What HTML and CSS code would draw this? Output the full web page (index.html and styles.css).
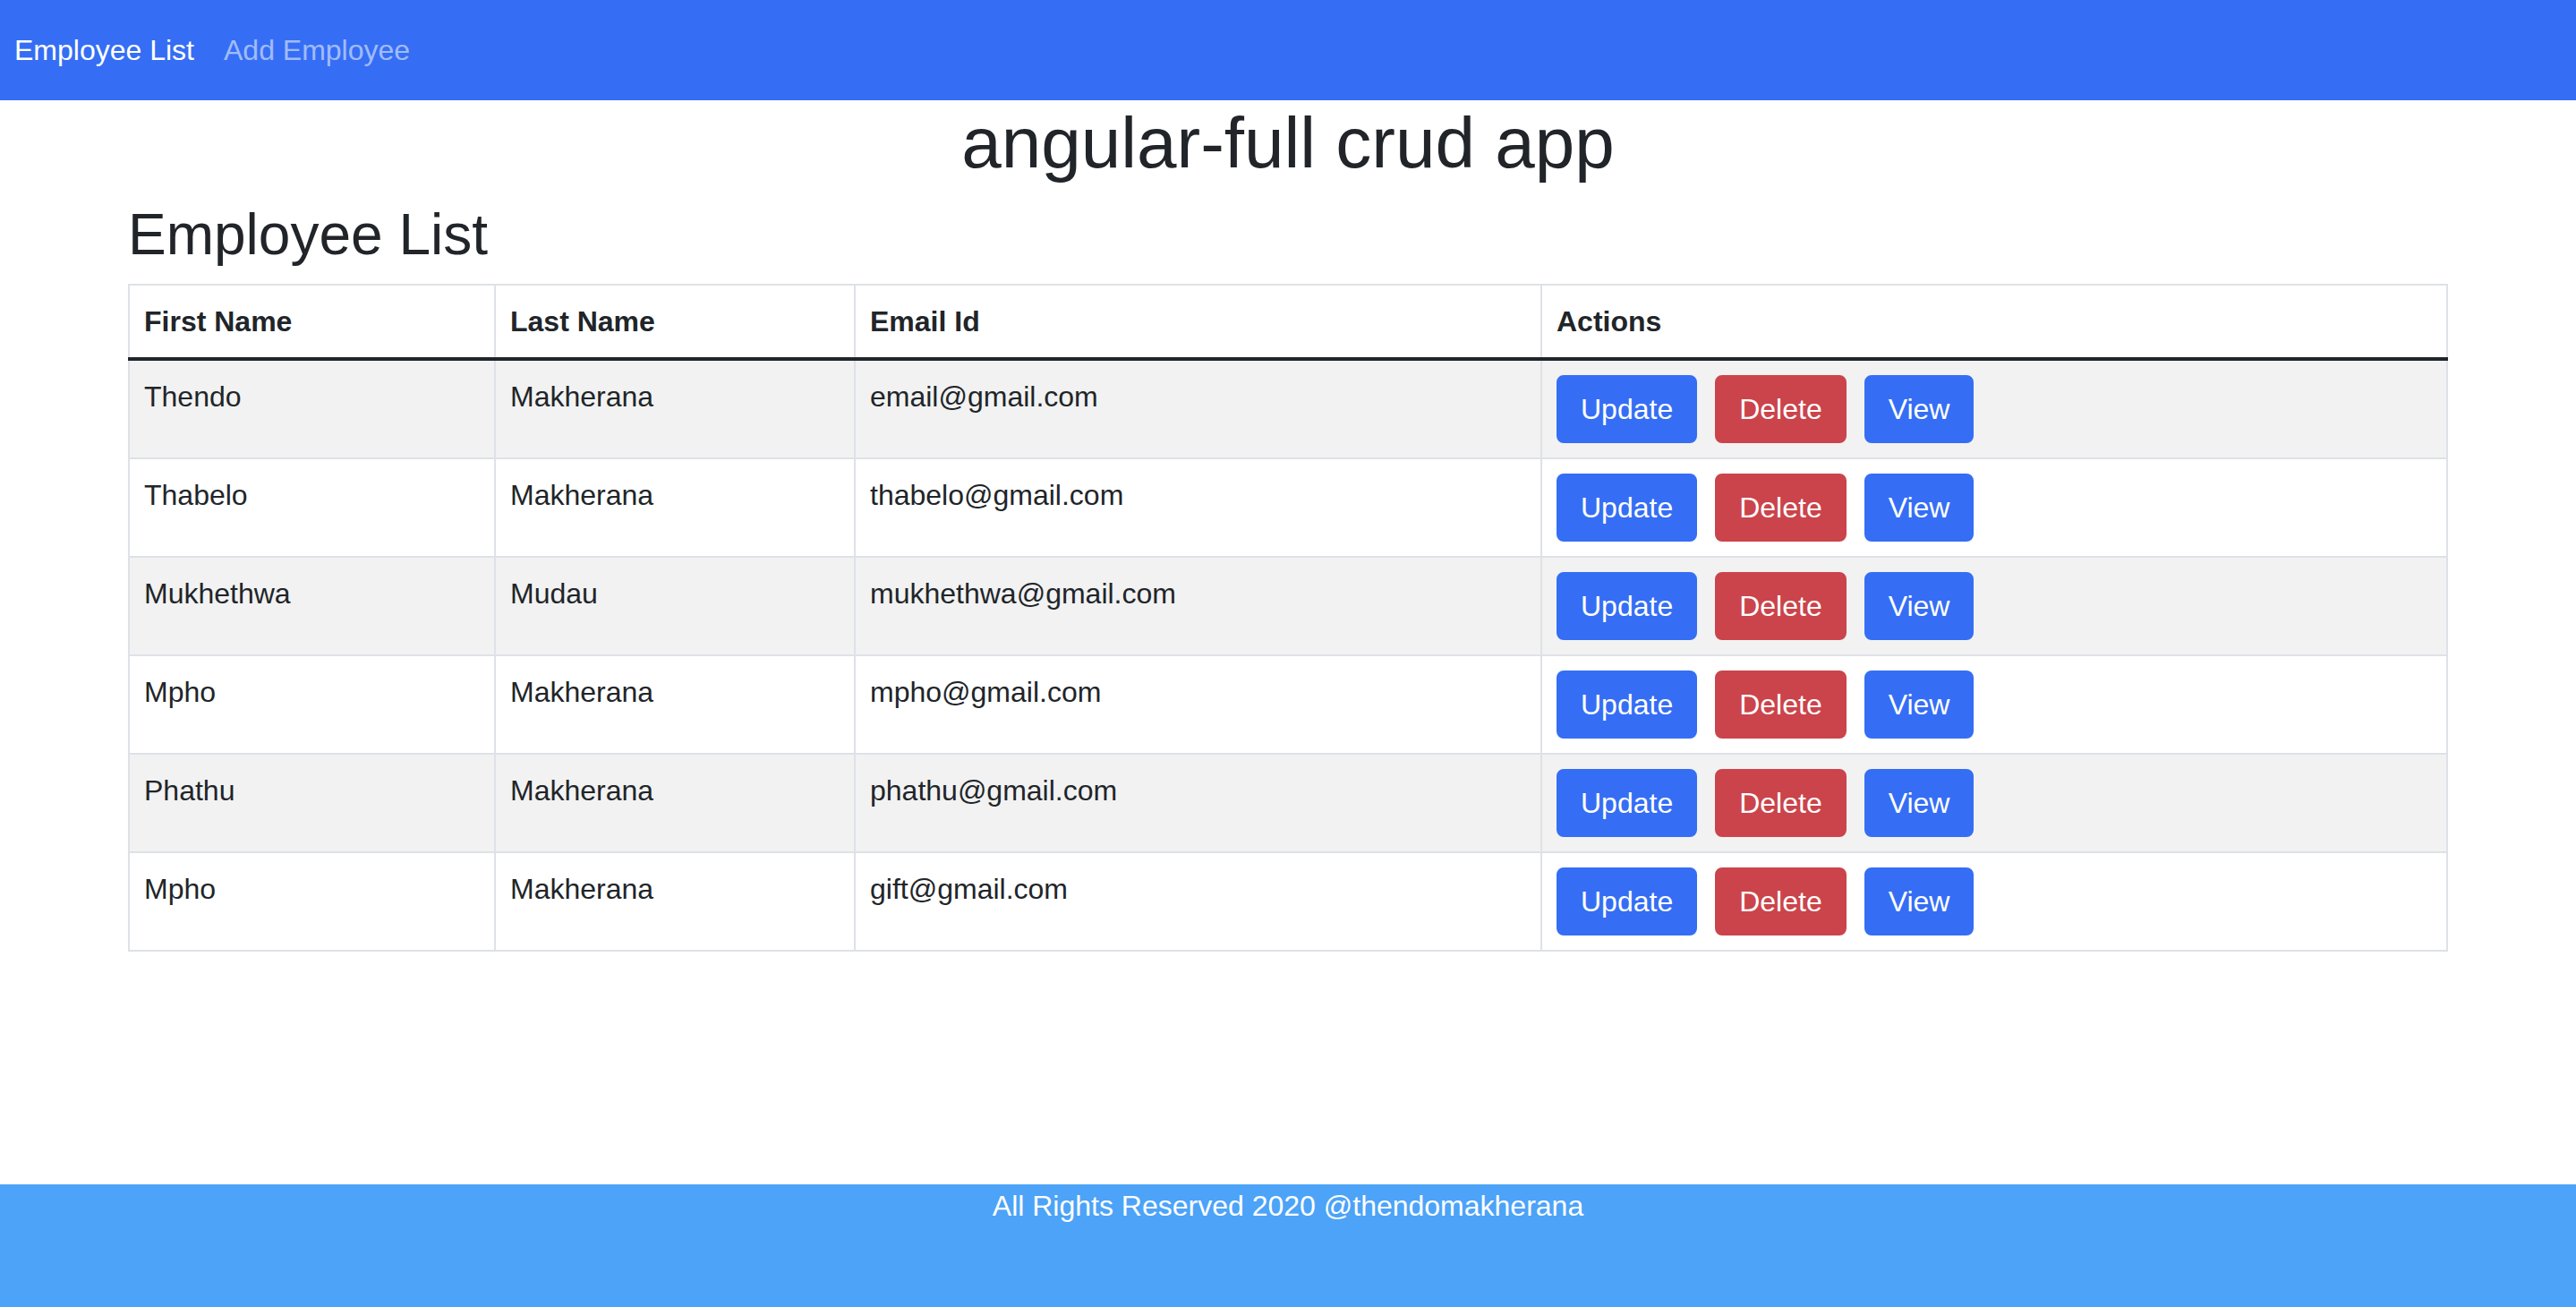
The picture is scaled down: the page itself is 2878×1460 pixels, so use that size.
FILE: index.html
```html
<!DOCTYPE html>
<html lang="en">
<head>
<meta charset="utf-8">
<title>angular-full crud app</title>
<link rel="stylesheet" href="styles.css">
</head>
<body>
<div class="page">
  <nav class="navbar">
    <a class="nav-link active" href="#">Employee List</a>
    <a class="nav-link" href="#">Add Employee</a>
  </nav>
  <main class="main">
    <h1 class="title">angular-full crud app</h1>
    <div class="container">
      <h2 class="subtitle">Employee List</h2>
      <table class="table">
        <colgroup>
          <col class="c1"><col class="c2"><col class="c3"><col class="c4">
        </colgroup>
        <thead>
          <tr><th>First Name</th><th>Last Name</th><th>Email Id</th><th>Actions</th></tr>
        </thead>
        <tbody>
          <tr class="odd"><td>Thendo</td><td>Makherana</td><td>email@gmail.com</td><td><div class="actions"><button class="btn btn-primary">Update</button><button class="btn btn-danger">Delete</button><button class="btn btn-primary">View</button></div></td></tr>
          <tr><td>Thabelo</td><td>Makherana</td><td>thabelo@gmail.com</td><td><div class="actions"><button class="btn btn-primary">Update</button><button class="btn btn-danger">Delete</button><button class="btn btn-primary">View</button></div></td></tr>
          <tr class="odd"><td>Mukhethwa</td><td>Mudau</td><td>mukhethwa@gmail.com</td><td><div class="actions"><button class="btn btn-primary">Update</button><button class="btn btn-danger">Delete</button><button class="btn btn-primary">View</button></div></td></tr>
          <tr><td>Mpho</td><td>Makherana</td><td>mpho@gmail.com</td><td><div class="actions"><button class="btn btn-primary">Update</button><button class="btn btn-danger">Delete</button><button class="btn btn-primary">View</button></div></td></tr>
          <tr class="odd"><td>Phathu</td><td>Makherana</td><td>phathu@gmail.com</td><td><div class="actions"><button class="btn btn-primary">Update</button><button class="btn btn-danger">Delete</button><button class="btn btn-primary">View</button></div></td></tr>
          <tr><td>Mpho</td><td>Makherana</td><td>gift@gmail.com</td><td><div class="actions"><button class="btn btn-primary">Update</button><button class="btn btn-danger">Delete</button><button class="btn btn-primary">View</button></div></td></tr>
        </tbody>
      </table>
    </div>
  </main>
  <footer class="footer">All Rights Reserved 2020 @thendomakherana</footer>
</div>
</body>
</html>
```
FILE: styles.css
```css
* { box-sizing: border-box; }
html, body { margin: 0; padding: 0; }
body {
  font-family: "Liberation Sans", Arial, sans-serif;
  font-size: 32px;
  line-height: 1.5;
  color: #212529;
  background: #fff;
}
.page {
  display: flex;
  flex-direction: column;
  min-height: 100vh;
}
.navbar {
  display: flex;
  align-items: center;
  gap: 33px;
  height: 112px;
  padding: 0 16px;
  background: #356ef4;
  flex-shrink: 0;
}
.nav-link {
  color: rgba(255, 255, 255, 0.55);
  text-decoration: none;
  font-size: 32px;
  line-height: 48px;
}
.nav-link.active { color: #fff; }
.main { flex: 1; }
.title {
  margin: 0 0 16px;
  text-align: center;
  font-size: 80px;
  font-weight: 500;
  line-height: 1.2;
}
.container {
  width: 2592px;
  margin: 0 auto;
}
.subtitle {
  margin: 0 0 16px;
  font-size: 64px;
  font-weight: 500;
  line-height: 1.2;
}
.table {
  width: 100%;
  border-collapse: collapse;
  table-layout: fixed;
}
.c1 { width: 409px; }
.c2 { width: 402px; }
.c3 { width: 767px; }
.c4 { width: auto; }
.table th, .table td {
  border: 2px solid #dee2e6;
  padding: 16px;
  text-align: left;
  vertical-align: top;
}
.table th { font-weight: bold; }
.table thead th { border-bottom: 4px solid #212529; }
.table tr.odd td { background: #f2f2f2; }
.actions {
  display: flex;
  gap: 20px;
}
.btn {
  font-family: inherit;
  font-size: 32px;
  line-height: 48px;
  padding: 12px 25px;
  border: 2px solid transparent;
  border-radius: 8px;
  color: #fff;
  cursor: pointer;
}
.btn-primary { background: #356ef4; border-color: #356ef4; }
.btn-danger { background: #cb444b; border-color: #cb444b; }
.footer {
  height: 137px;
  flex-shrink: 0;
  background: #4ca3f7;
  color: #fff;
  text-align: center;
  font-size: 32px;
  line-height: 48px;
}
```
